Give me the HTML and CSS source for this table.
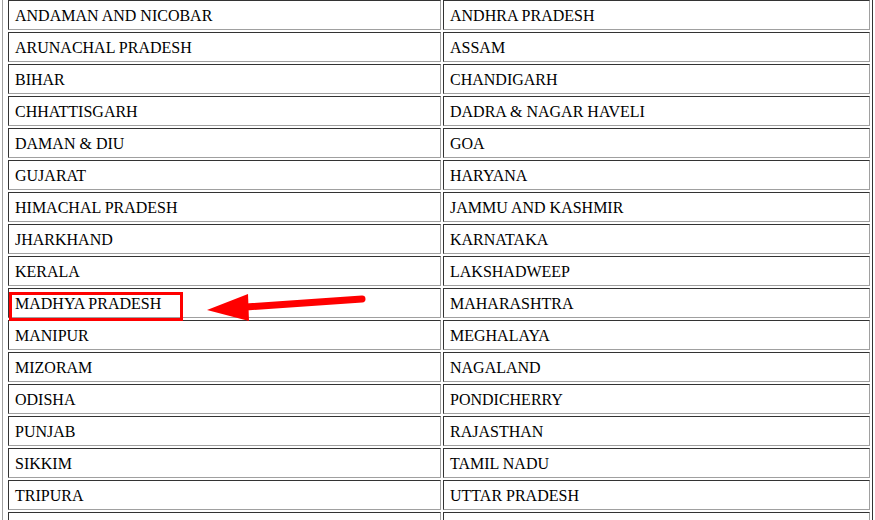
FILE: index.html
```html
<!DOCTYPE html>
<html>
<head>
<meta charset="utf-8">
<link rel="stylesheet" href="styles.css">
</head>
<body>
<div class="page">
<table class="states">
<tr><td class="c1">ANDAMAN AND NICOBAR</td><td class="c2">ANDHRA PRADESH</td></tr>
<tr><td class="c1">ARUNACHAL PRADESH</td><td class="c2">ASSAM</td></tr>
<tr><td class="c1">BIHAR</td><td class="c2">CHANDIGARH</td></tr>
<tr><td class="c1">CHHATTISGARH</td><td class="c2">DADRA &amp; NAGAR HAVELI</td></tr>
<tr><td class="c1">DAMAN &amp; DIU</td><td class="c2">GOA</td></tr>
<tr><td class="c1">GUJARAT</td><td class="c2">HARYANA</td></tr>
<tr><td class="c1">HIMACHAL PRADESH</td><td class="c2">JAMMU AND KASHMIR</td></tr>
<tr><td class="c1">JHARKHAND</td><td class="c2">KARNATAKA</td></tr>
<tr><td class="c1">KERALA</td><td class="c2">LAKSHADWEEP</td></tr>
<tr><td class="c1">MADHYA PRADESH</td><td class="c2">MAHARASHTRA</td></tr>
<tr><td class="c1">MANIPUR</td><td class="c2">MEGHALAYA</td></tr>
<tr><td class="c1">MIZORAM</td><td class="c2">NAGALAND</td></tr>
<tr><td class="c1">ODISHA</td><td class="c2">PONDICHERRY</td></tr>
<tr><td class="c1">PUNJAB</td><td class="c2">RAJASTHAN</td></tr>
<tr><td class="c1">SIKKIM</td><td class="c2">TAMIL NADU</td></tr>
<tr><td class="c1">TRIPURA</td><td class="c2">UTTAR PRADESH</td></tr>
<tr><td class="c1"></td><td class="c2"></td></tr>
</table>
<div class="highlight"></div>
<svg class="arrow" width="875" height="520" viewBox="0 0 875 520">
  <line x1="246" y1="307" x2="362" y2="299" stroke="#ff0000" stroke-width="7" stroke-linecap="round"/>
  <polygon points="207,310 248,294 249,321" fill="#ff0000"/>
</svg>
</div>
</body>
</html>
```

FILE: styles.css
```css
html, body {
  margin: 0;
  padding: 0;
  background: #ffffff;
  overflow: hidden;
}
.page {
  position: relative;
  width: 875px;
  height: 520px;
  overflow: hidden;
}
.states {
  margin: -3px 0 0 2px;
  border-collapse: separate;
  border-spacing: 2px;
  padding: 0 0 0 3px;
  border-style: solid;
  border-width: 1px;
  border-color: #a0a0a0 #333333 #333333 #a0a0a0;
  font-family: "Liberation Serif", "Times New Roman", serif;
  font-size: 16px;
  color: #000;
  table-layout: fixed;
}
.states td {
  height: 30px;
  box-sizing: border-box;
  padding: 2px 6px 0 6px;
  border-style: solid;
  border-width: 1px;
  border-color: #333333 #a0a0a0 #a0a0a0 #333333;
  vertical-align: middle;
  white-space: nowrap;
}
.c1 { width: 433px; }
.c2 { width: 427px; }
.highlight {
  position: absolute;
  left: 9px;
  top: 292px;
  width: 174px;
  height: 29px;
  box-sizing: border-box;
  border: 3px solid #ff0000;
}
.arrow {
  position: absolute;
  left: 0;
  top: 0;
}
```
